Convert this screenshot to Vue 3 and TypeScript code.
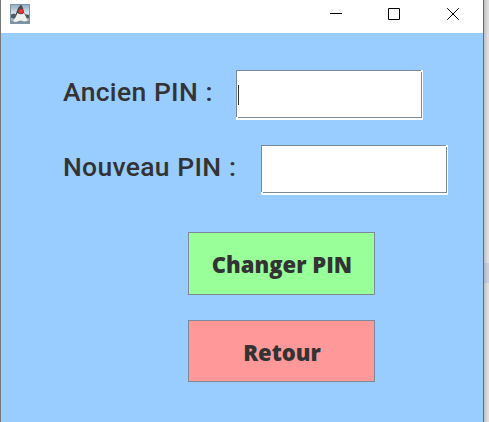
<script setup lang="ts">
import { ref } from 'vue'

interface PinField {
  id: string
  label: string
  caret: boolean
}

const fields: PinField[] = [
  { id: 'ancien', label: 'Ancien PIN :', caret: true },
  { id: 'nouveau', label: 'Nouveau PIN :', caret: false },
]
const values = ref<Record<string, string>>({ ancien: '', nouveau: '' })
</script>

<template>
  <div class="desktop">
    <main class="window">
      <header class="titlebar">
        <svg class="app-icon" width="20" height="20" viewBox="0 0 20 20">
          <defs>
            <linearGradient id="sky" x1="0" y1="0" x2="0" y2="1">
              <stop offset="0" stop-color="#8fabc0" />
              <stop offset="0.45" stop-color="#d9e4ec" />
              <stop offset="0.8" stop-color="#a5b8c6" />
              <stop offset="1" stop-color="#8299ab" />
            </linearGradient>
          </defs>
          <rect x="0.5" y="0.5" width="19" height="19" fill="url(#sky)" stroke="#7d97a9" />
          <path d="M1 10.500 4 9.500 7 11l-1 4-5-1zM14.500 10l4.500 1v3.500l-4-.5z" fill="#4d5d69" />
          <path d="M1 17h18v2H1z" fill="#7b8f9e" />
          <path d="M10.5 1 8 4 6.500 8l-1 3h9.500l-1-3-1-4-1.500-3z" fill="#45494c" />
          <path d="M7.500 9q3.500 2.500 6.500 0l2 4 1.500 4-3.500.5-3.500-1.200L6 18l-3-.5 3-5z" fill="#f0f1ef" />
          <circle cx="11" cy="7.3" r="2.5" fill="#d92b2b" />
          <circle cx="11" cy="7.2" r="1.2" fill="#f9403a" />
        </svg>
        <nav class="controls">
          <svg width="12" height="12" viewBox="0 0 12 12"><path d="M0 5.5h12" /></svg>
          <svg width="12" height="12" viewBox="0 0 12 12"><path d="M.5.5h11v11H.5z" /></svg>
          <svg width="12" height="12" viewBox="0 0 12 12"><path d="m.2.2 11.6 11.6M11.8.2.2 11.8" /></svg>
        </nav>
      </header>
      <form class="content" @submit.prevent>
        <div v-for="field in fields" :key="field.id" class="row">
          <label :for="field.id" :class="['label', field.id]">{{ field.label }}</label>
          <div class="field">
            <i v-if="field.caret && !values[field.id]" class="caret"></i>
            <input :id="field.id" v-model="values[field.id]" class="input" type="password" />
          </div>
        </div>
        <div class="actions">
          <button class="button change" type="submit"><span>Changer PIN</span></button>
          <button class="button back" type="button"><span>Retour</span></button>
        </div>
      </form>
    </main>
    <aside class="edge"><i></i></aside>
  </div>
</template>

<style>
body {
  overflow: hidden;
}
</style>

<style scoped>
.desktop {
  display: flex;
  width: 489px;
  height: 422px;
  box-sizing: border-box;
}
.window {
  box-sizing: border-box;
  width: 484px;
  height: 422px;
  border-left: 1px solid #777777;
  border-right: 1px solid #6c6c6c;
  background: #99ccff;
}
.edge {
  width: 5px;
  padding-top: 263px;
  box-sizing: border-box;
  background: linear-gradient(90deg, #bebebe, #dfdfdf 75%);
}
.edge i {
  display: block;
  height: 20px;
  background: linear-gradient(90deg, #adb3c0, #c9cfdd 75%);
}
.titlebar {
  display: flex;
  justify-content: space-between;
  height: 33px;
  box-sizing: border-box;
  padding: 4px 24px 0 9px;
  background: #fff;
}
.app-icon {
  display: block;
}
.controls {
  display: flex;
  padding-top: 4px;
}
.controls svg {
  margin-left: 47px;
  fill: none;
  stroke: #000;
  stroke-width: 1;
}
.controls svg:nth-child(2) {
  margin-left: 46px;
}
.content {
  padding: 37px 0 0 62px;
}
.row {
  display: flex;
  height: 50px;
  margin-bottom: 25px;
}
.label {
  box-sizing: border-box;
  width: 173px;
  padding-top: 2px;
  font: 500 26.5px/40px Roboto, sans-serif;
  letter-spacing: 0.3px;
  word-spacing: 0.6px;
  color: #333;
  white-space: nowrap;
}
.nouveau {
  width: 198px;
}
.field {
  position: relative;
  box-sizing: border-box;
  width: 187px;
  height: 50px;
  padding: 0 1px 2px 0;
  background: #fff;
}
.input {
  display: block;
  width: 186px;
  height: 48px;
  box-sizing: border-box;
  margin: 0;
  padding: 2px;
  border: 1px solid #7a8a99;
  border-radius: 0;
  outline: none;
  background: #fff;
  font: 24px "Noto Sans", sans-serif;
}
.field::before,
.field::after {
  content: "";
  position: absolute;
  background: #fff;
}
.field::before {
  top: 0;
  right: 1px;
  width: 1px;
  height: 2px;
}
.field::after {
  left: 0;
  bottom: 2px;
  width: 2px;
  height: 1px;
}
.caret {
  position: absolute;
  left: 2px;
  top: 15px;
  width: 1px;
  height: 20px;
  background: #333;
}
.actions {
  display: flex;
  flex-direction: column;
  gap: 25px;
  padding: 12px 0 0 125px;
}
.button {
  display: block;
  width: 187px;
  height: 63px;
  box-sizing: border-box;
  padding: 1px 0 0 1px;
  border: 1px solid #7a8a99;
  border-radius: 0;
  color: #333;
  font: 800 22px/30px "Open Sans", sans-serif;
}
.change {
  background: #99ff99;
}
.back {
  height: 62px;
  padding-top: 1px;
  background: #ff9999;
}
</style>
